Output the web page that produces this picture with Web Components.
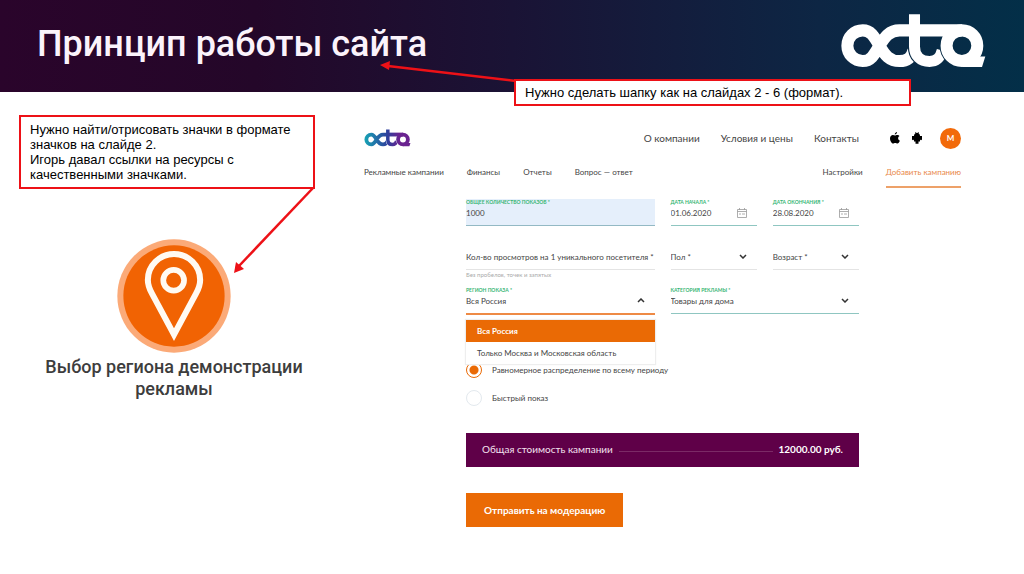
<!DOCTYPE html>
<html lang="ru">
<head>
<meta charset="utf-8">
<meta name="viewport" content="width=device-width, initial-scale=1">
<title>Принцип работы сайта</title>
<style>
  body { margin: 0; background: #fff; color: #444; font-family: Lato, "Open Sans", sans-serif; }
</style>
</head>
<body>
<slide-page>
  <slide-header slot="header">Принцип работы сайта
    <callout-note slot="note" arrow="left">Нужно сделать шапку как на слайдах 2 - 6 (формат).</callout-note>
  </slide-header>
  <callout-note slot="aside" arrow="down">Нужно найти/отрисовать значки в формате значков на слайде 2.<br>Игорь давал ссылки на ресурсы с качественными значками.</callout-note>
  <region-badge slot="aside">Выбор региона демонстрации рекламы</region-badge>
  <site-header></site-header>
  <campaign-form></campaign-form>
</slide-page>

<script>
const define = (name, html, setup) => customElements.define(name, class extends HTMLElement {
  connectedCallback() {
    if (this.shadowRoot) return;
    const t = document.createElement('template');
    t.innerHTML = typeof html === 'function' ? html(this) : html;
    this.attachShadow({ mode: 'open' }).append(t.content.cloneNode(true));
    if (setup) setup(this);
  }
});

define('slide-page', `
  <style>
    :host { display: block; }
    main { display: grid; grid-template-columns: 310fr 597fr; column-gap: 35px; padding: 23px 63px 40px 19px; }
    .aside { display: flex; flex-direction: column; min-width: 0; }
    .site { min-width: 0; }
  </style>
  <slot name="header"></slot>
  <main>
    <div class="aside"><slot name="aside"></slot></div>
    <div class="site"><slot></slot></div>
  </main>`);

define('octa-logo', `
  <style>
    :host { display: block; color: #fff; }
    svg { display: block; width: 100%; }
  </style>
  <svg viewBox="60 38 440 167" role="img" aria-label="octa" fill="none" stroke-width="36">
    <defs>
      <linearGradient id="g" gradientUnits="userSpaceOnUse" x1="60" y1="0" x2="500" y2="0">
        <stop offset="0" style="stop-color:var(--logo-a, #fff)"/>
        <stop offset=".5" style="stop-color:var(--logo-b, #fff)"/>
        <stop offset=".75" style="stop-color:var(--logo-c, #fff)"/>
        <stop offset="1" style="stop-color:var(--logo-c, #fff)"/>
      </linearGradient>
      <mask id="mc" maskUnits="userSpaceOnUse" x="50" y="30" width="460" height="180">
        <path fill="#fff" d="M50 30H510V210H50Z"/>
        <path stroke="#000" stroke-width="40" d="M283 125V138C283 166 300 182 328 182"/>
      </mask>
      <mask id="mt" maskUnits="userSpaceOnUse" x="50" y="30" width="460" height="180">
        <path fill="#fff" d="M50 30H510V210H50Z"/>
        <circle cx="425" cy="136" r="67" fill="#000"/>
      </mask>
    </defs>
    <path stroke="url(#g)" mask="url(#mc)" d="M284 90H238C208 90 194 110 178 136C162 164 152 182 128 182A46 46 0 0 1 128 90C152 90 162 108 178 136C194 164 208 182 238 182C262 182 274 172 280 150"/>
    <path stroke="url(#g)" stroke-width="33" mask="url(#mt)" d="M283 42V138C283 166 300 183 328 183C350 183 360 172 366 150"/>
    <path stroke="url(#g)" d="M283 90H425"/>
    <circle stroke="url(#g)" cx="425" cy="136" r="46"/>
    <path fill="url(#g)" d="M425 200H485L495 168H462Z"/>
  </svg>`);

define('slide-header', `
  <style>
    :host { display: block; position: relative; }
    header { display: flex; align-items: center; justify-content: space-between; height: 92px; padding: 0 37px;
      box-sizing: border-box; background: linear-gradient(90deg, #2a042b 0%, #240729 25%, #1a1335 50%, #0d2644 80%, #032f48 100%); }
    h1 { margin: 0; padding-bottom: 4px; font: 500 36px/44px Roboto, sans-serif; color: #fbf3fb; }
    octa-logo { width: 147px; padding-bottom: 11px; }
    .note { position: absolute; top: 79px; left: 50.2%; right: 11%; }
  </style>
  <header><h1><slot></slot></h1><octa-logo></octa-logo></header>
  <div class="note"><slot name="note"></slot></div>`);

define('callout-note', `
  <style>
    :host { display: block; position: relative; box-sizing: border-box; background: #fff; border: 2px solid #ed1117;
      padding: 5px 9px; font: 13px/15px "Liberation Sans", Arial, sans-serif; color: #000; }
    :host([arrow=down]) { margin-right: 14px; }
    svg { position: absolute; overflow: visible; fill: #ed1117; stroke: #ed1117; stroke-width: 2.500; pointer-events: none; }
    :host([arrow=left]) svg { right: 100%; bottom: 100%; width: 135px; height: 16px; }
    :host([arrow=left]) { padding: 4px 9px; }
    :host([arrow=down]) svg { right: 0; top: 100%; width: 80px; height: 86px; }
    .left, .down { display: none; }
    :host([arrow=left]) .left, :host([arrow=down]) .down { display: inline; }
  </style>
  <slot></slot>
  <svg aria-hidden="true">
    <g class="left"><path d="M135 16L7 1"/><path stroke="none" d="M-1 0L9 -4L8 5Z"/></g>
    <g class="down"><path d="M80 1L6 79"/><path stroke="none" d="M1 86L3 75L11 82Z"/></g>
  </svg>`);

define('region-badge', `
  <style>
    :host { display: flex; flex-direction: column; align-items: center; margin-top: 50px; }
    svg { width: 114px; height: 114px; }
    h2 { margin: 3px 0 0; max-width: 280px; text-align: center; font: 500 18px/22px Roboto, sans-serif; color: #3d3d3d; }
  </style>
  <svg viewBox="52 42 340 340" fill="none" stroke="#fffaf2" aria-hidden="true">
    <circle cx="222" cy="212" r="169" fill="#fbaa78" stroke="none"/>
    <circle cx="222" cy="212" r="151" fill="#f16303" stroke="none"/>
    <path stroke-width="18" stroke-linejoin="miter" d="M222 327L156 204C149 191 144 178 144 164A78 77 0 0 1 300 164C300 178 295 191 288 204Z"/>
    <circle cx="221" cy="165" r="31" stroke-width="17"/>
  </svg>
  <h2><slot></slot></h2>`);

define('site-header', `
  <style>
    :host { display: block; }
    a { color: #444; text-decoration: none; white-space: nowrap; }
    .top, .sub { display: flex; align-items: center; }
    .top { height: 46px; font-size: 10px; line-height: 16px; }
    .top nav { display: flex; gap: 21px; margin-left: auto; }
    octa-logo { width: 47px; --logo-a: #16a5b5; --logo-b: #2e3f9c; --logo-c: #6a2390; }
    .apps { display: flex; gap: 12px; margin: 0 18px 0 31px; }
    .apps a, svg { display: block; }
    .user { display: grid; place-items: center; width: 21px; height: 21px; border: 0; border-radius: 50%;
      padding: 0; background: #f26a0a; color: #fff; font: 700 8px/10px Lato, sans-serif; }
    .sub { gap: 23px; font-size: 8px; line-height: 22px; }
    .sub a { padding-bottom: 3px; border-bottom: 2px solid transparent; }
    .sub .push { margin-left: auto; }
    .sub .active { color: #e9884a; border-color: #eda169; }
  </style>
  <div class="top">
    <octa-logo></octa-logo>
    <nav><a href="#about">О компании</a><a href="#prices">Условия и цены</a><a href="#contacts">Контакты</a></nav>
    <div class="apps">
      <a href="#ios" aria-label="iOS"><svg width="10" height="12" viewBox="0 0 20 24"><path d="M14 0c0 3-2 5-4.500 5C9.500 2.500 11.500.5 14 0ZM10 7c1 0 2.500-1.200 4.500-1.200 2 0 3.700 1 4.500 2.400-4 2.300-3.300 7.800.8 9.400C18.500 20.800 16.800 23 14.800 23c-1.600 0-2.200-.9-4.300-.9s-2.800.9-4.300.9C3 23 0 17.500 0 13c0-4.400 2.800-7 5.700-7C7.500 6 9 7 10 7Z"/></svg></a>
      <a href="#android" aria-label="Android"><svg width="10" height="12" viewBox="0 0 20 24"><path d="M4 8C4 5 5.500 3.500 7 2.500L6 .8 7 .2 8.200 2C9.300 1.600 10.700 1.600 11.800 2L13 .2l1 .6-1 1.700c1.500 1 3 2.500 3 5.500ZM0 8h20v7q-2 3-4 0v4h-3v4.500h-6V19H4v-4q-2 3-4 0Z"/></svg></a>
    </div>
    <button class="user" type="button" aria-label="Профиль М">М</button>
  </div>
  <nav class="sub">
    <a href="#campaigns">Рекламные кампании</a><a href="#finance">Финансы</a><a href="#reports">Отчеты</a><a href="#faq">Вопрос — ответ</a>
    <a class="push" href="#settings">Настройки</a><a class="active" href="#add">Добавить кампанию</a>
  </nav>`);

const chevron = up => `<svg width="8" height="5" viewBox="0 0 8 5" fill="none" stroke="#333" stroke-width="1.500" aria-hidden="true"><path d="${up ? 'M1 4L4 1L7 4' : 'M1 1L4 4L7 1'}"/></svg>`;
const calendar = `<svg width="10" height="10" viewBox="0 0 20 20" fill="none" stroke="#999" stroke-width="1.600" aria-hidden="true"><path d="M1 3H19V19H1ZM1 7H19M5 0V4M15 0V4M4 12H8M10 12H16"/></svg>`;

define('form-field', el => {
  const kind = el.getAttribute('kind'), label = el.getAttribute('label') || '', value = el.getAttribute('value') || '';
  const hint = el.getAttribute('hint') || '', name = el.getAttribute('name');
  const control = kind === 'select'
    ? `<select id="c" aria-label="${name}"><option>${value}</option></select>${chevron(el.hasAttribute('open'))}`
    : `<input id="c" type="text" aria-label="${name}" ${label ? `value="${value}"` : `placeholder="${value}"`}>${kind === 'date' ? calendar : ''}`;
  return `
  <style>
    :host { display: block; position: relative; min-width: 0; }
    .box { border-bottom: 1px solid #8fc6c1; }
    :host([empty]) .box { border-color: #e4e4e4; }
    :host([filled]) .box { background: #e5effb; border-color: #93b9c4; }
    :host([open]) .box { border-bottom: 2px solid #ee8a45; }
    label { display: block; height: 6px; font-size: 5px; line-height: 6px; font-weight: 700; color: #35b574; white-space: nowrap; text-transform: uppercase; }
    .row { display: flex; align-items: center; height: 15px; padding: 0 10px 5px 0; }
    input, select { flex: 1; min-width: 0; width: 0; height: 14px; margin: 0; padding: 0; border: 0; outline: 0; background: none;
      appearance: none; font: 8px/14px Lato, sans-serif; color: #444; }
    input::placeholder { color: #444; opacity: 1; }
    :host([wide]) .row { padding-right: 0; }
    .hint { height: 8px; font-size: 6px; line-height: 10px; color: #aaa; }
  </style>
  <div class="box"><label for="c">${label}</label><div class="row">${control}</div></div>
  <div class="hint">${hint}</div>
  <slot></slot>`;
});

define('option-menu', `
  <style>
    :host { display: block; position: absolute; z-index: 1; top: 33px; left: 0; right: 0; background: #fff; box-shadow: 0 0 1px 1px #eee; }
    button { display: block; width: 100%; height: 22px; padding: 0 11px; border: 0; background: #fff; text-align: left;
      font: 8px/12px Lato, sans-serif; color: #444; white-space: nowrap; }
    .on { background: #ea6a05; color: #fff; font-weight: 700; }
  </style>
  <div role="listbox" aria-label="Регион показа">
    <button type="button" role="option" aria-selected="true" class="on">Вся Россия</button>
    <button type="button" role="option" aria-selected="false">Только Москва и Московская область</button>
  </div>`);

define('campaign-form', `
  <style>
    :host { display: block; margin: 11px 102px 0; }
    form { display: flex; flex-direction: column; align-items: stretch; }
    .grid { display: grid; grid-template-columns: repeat(4, minmax(0, 1fr)); gap: 9px 16px; }
    .two { grid-column: span 2; }
    fieldset { display: grid; gap: 12px; margin: 39px 0 0; padding: 0; border: 0; }
    fieldset label { display: flex; align-items: center; gap: 10px; height: 16px; font-size: 8px; line-height: 12px; }
    input { appearance: none; width: 16px; height: 16px; margin: 0; border: 1px solid #e3e9ee; border-radius: 50%; background: #fff; }
    input:checked { border-color: #ea6a05; background: radial-gradient(circle, #ea6a05 4px, #fff 5px); }
    .total { display: flex; align-items: center; gap: 6px; height: 34px; margin-top: 27px; padding: 0 16px 2px; box-sizing: border-box; background: #5f0048; color: #f5e3f0; font-size: 10px; line-height: 14px; }
    .total i { flex: 1; border-top: 1px solid #7b2a66; margin-top: 4px; }
    .total b { color: #fff; }
    .send { align-self: flex-start; height: 34px; margin-top: 26px; padding: 0 18px; border: 0; background: #ea6a05; color: #fff; font: 700 10px/14px Lato, sans-serif; white-space: nowrap; }
  </style>
  <form>
    <div class="grid">
      <form-field class="two" filled name="Общее количество показов" label="Общее количество показов *" value="1000"></form-field>
      <form-field kind="date" name="Дата начала" label="Дата начала *" value="01.06.2020"></form-field>
      <form-field kind="date" name="Дата окончания" label="Дата окончания *" value="28.08.2020"></form-field>
      <form-field class="two" wide empty name="Кол-во просмотров" value="Кол-во просмотров на 1 уникального посетителя *" hint="Без пробелов, точек и запятых"></form-field>
      <form-field empty kind="select" name="Пол" value="Пол *"></form-field>
      <form-field empty kind="select" name="Возраст" value="Возраст *"></form-field>
      <form-field class="two" open kind="select" name="Регион показа" label="Регион показа *" value="Вся Россия"><option-menu></option-menu></form-field>
      <form-field class="two" kind="select" name="Категория рекламы" label="Категория рекламы *" value="Товары для дома"></form-field>
    </div>
    <fieldset aria-label="Распределение показов">
      <label><input type="radio" name="pace" checked>Равномерное распределение по всему периоду</label>
      <label><input type="radio" name="pace">Быстрый показ</label>
    </fieldset>
    <div class="total"><span>Общая стоимость кампании</span><i></i><b>12000.00 руб.</b></div>
    <button class="send" type="button">Отправить на модерацию</button>
  </form>`);
</script>
</body>
</html>
